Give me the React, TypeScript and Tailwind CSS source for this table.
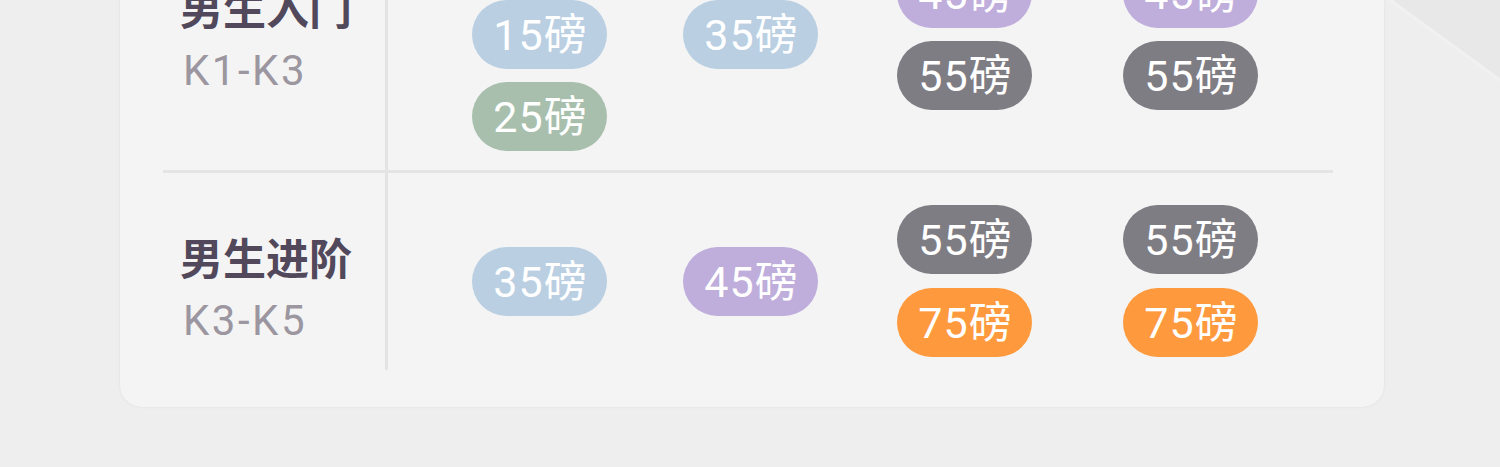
import React from "react";

type Pill = { v: string; c: string };

const BLUE = "bg-[#bacfe2]";
const GREEN = "bg-[#a8bfad]";
const PURPLE = "bg-[#bfaddb]";
const GRAY = "bg-[#7f7d84]";
const ORANGE = "bg-[#fe9a3d]";

const rows: {
  title: string;
  sub: string;
  labelPt: string;
  areaPad: string;
  border: boolean;
  cols: Pill[][];
}[] = [
  {
    title: "男生入门",
    sub: "K1-K3",
    labelPt: "pt-[96px]",
    areaPad: "pt-[33px] pb-[19px]",
    border: true,
    cols: [
      [
        { v: "5磅", c: BLUE },
        { v: "15磅", c: BLUE },
        { v: "25磅", c: GREEN },
      ],
      [{ v: "35磅", c: BLUE }],
      [
        { v: "45磅", c: PURPLE },
        { v: "55磅", c: GRAY },
      ],
      [
        { v: "45磅", c: PURPLE },
        { v: "55磅", c: GRAY },
      ],
    ],
  },
  {
    title: "男生进阶",
    sub: "K3-K5",
    labelPt: "pt-[58px]",
    areaPad: "pt-[32px] pb-[13px]",
    border: false,
    cols: [
      [{ v: "35磅", c: BLUE }],
      [{ v: "45磅", c: PURPLE }],
      [
        { v: "55磅", c: GRAY },
        { v: "75磅", c: ORANGE },
      ],
      [
        { v: "55磅", c: GRAY },
        { v: "75磅", c: ORANGE },
      ],
    ],
  },
];

function PillTag({ p }: { p: Pill }) {
  return (
    <div
      className={`${p.c} flex h-[69px] w-[135px] items-center justify-center rounded-full text-[43px] leading-none tracking-[1px] text-white`}
      style={{ fontFamily: '"Roboto", "Noto Sans CJK SC", sans-serif' }}
    >
      <span className="translate-x-[1px] translate-y-[1px]">{p.v}</span>
    </div>
  );
}

export default function App() {
  return (
    <div className="relative h-[467px] w-full overflow-hidden bg-[#eeeeee]">
      <svg
        className="pointer-events-none absolute right-0 top-0"
        width="120"
        height="90"
        viewBox="0 0 120 90"
      >
        <polygon points="10,0 120,0 120,80" fill="#e8e8e8" />
        <line x1="10" y1="0" x2="120" y2="80" stroke="#f1f1f1" strokeWidth="3" />
      </svg>
      <div className="relative pl-[120px]">
        <div className="-mt-[115px] w-[1264px] rounded-[22px] bg-[#f4f4f4] pb-[37px] shadow-[0_0_3px_rgba(0,0,0,0.07)]">
          <div className="pl-[43px] pr-[51px]">
            {rows.map((r, i) => (
              <div
                key={i}
                className={`flex ${r.border ? "border-b-[3px] border-[#e4e4e4]" : ""}`}
              >
                <div
                  className={`w-[225px] shrink-0 border-r-[3px] border-[#e3e3e3] pl-[17px] ${r.labelPt}`}
                >
                  <div
                    className="text-[43px] font-bold leading-[50px] text-[#51485b]"
                    style={{ fontFamily: '"Noto Sans CJK SC", "Noto Sans", sans-serif' }}
                  >
                    {r.title}
                  </div>
                  <div
                    className="mt-[15px] pl-[3px] text-[42px] font-normal leading-[50px] tracking-[2.5px] text-[#9b96a0]"
                    style={{ fontFamily: '"Roboto", "Noto Sans", sans-serif' }}
                  >
                    {r.sub}
                  </div>
                </div>
                <div
                  className={`grid grid-cols-[211px_214px_226px_135px] items-center pl-[84px] ${r.areaPad}`}
                >
                  {r.cols.map((col, j) => (
                    <div key={j} className={`flex flex-col ${i === 0 ? "gap-[13px]" : "gap-[14px]"}`}>
                      {col.map((p, k) => (
                        <PillTag key={k} p={p} />
                      ))}
                    </div>
                  ))}
                </div>
              </div>
            ))}
          </div>
        </div>
      </div>
    </div>
  );
}
